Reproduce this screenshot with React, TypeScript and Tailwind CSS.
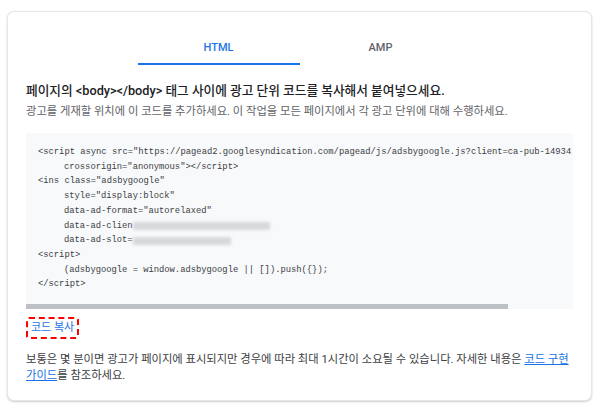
import React from "react";

const sans = { fontFamily: 'Roboto, "Noto Sans CJK KR", "Noto Sans", sans-serif' };
const mono = { fontFamily: '"Liberation Mono", "DejaVu Sans Mono", "Noto Sans CJK KR", monospace' };

function Blur({ w }: { w: number }) {
  return (
    <span
      className="inline-block align-middle h-[8px] bg-[#c9cbd0] blur-[1.5px] opacity-70"
      style={{ width: w }}
    />
  );
}

export default function App() {
  return (
    <div className="w-[600px] h-[409px] bg-white pt-[11px] pl-[7px]" style={sans}>
      <div className="w-[585px] h-[390px] rounded-[7px] border border-[#e6e6e6] shadow-[0_1px_2px_rgba(60,64,67,0.25)] bg-white px-[18px] pt-[21px]">
        <div className="flex justify-center">
          <div className="w-[162px] h-[32px] flex items-center justify-center border-b-2 border-[#1a73e8] text-[11px] font-medium text-[#1a73e8]">
            HTML
          </div>
          <div className="w-[162px] h-[32px] flex items-center justify-center border-b-2 border-transparent text-[11px] font-medium text-[#5f6368]">
            AMP
          </div>
        </div>
        <div className="mt-[18px] text-[12.7px] leading-[16px] font-medium text-[#202124] whitespace-nowrap">
          페이지의 &lt;body&gt;&lt;/body&gt; 태그 사이에 광고 단위 코드를 복사해서 붙여넣으세요.
        </div>
        <div className="mt-[5px] text-[11.3px] leading-[16px] text-[#5f6368] whitespace-nowrap">
          광고를 게재할 위치에 이 코드를 추가하세요. 이 작업을 모든 페이지에서 각 광고 단위에 대해 수행하세요.
        </div>
        <div className="mt-[13px] bg-[#f8f9fa] overflow-hidden">
          <div
            className="pt-[12px] pb-[12px] pl-[12px] text-[8.8px] leading-[14.7px] text-[#3c4043] whitespace-pre"
            style={mono}
          >
            <div>&lt;script async src="https://pagead2.googlesyndication.com/pagead/js/adsbygoogle.js?client=ca-pub-14934</div>
            <div className="pl-[26px]">crossorigin="anonymous"&gt;&lt;/script&gt;</div>
            <div>&lt;ins class="adsbygoogle"</div>
            <div className="pl-[26px]">style="display:block"</div>
            <div className="pl-[26px]">data-ad-format="autorelaxed"</div>
            <div className="pl-[26px] flex items-center">
              <span>data-ad-clien</span>
              <Blur w={137} />
            </div>
            <div className="pl-[26px] flex items-center">
              <span>data-ad-slot=</span>
              <Blur w={98} />
            </div>
            <div>&lt;script&gt;</div>
            <div className="pl-[26px]">(adsbygoogle = window.adsbygoogle || []).push({'{}'});</div>
            <div>&lt;/script&gt;</div>
          </div>
          <div className="h-[5px] w-[482px] bg-[#bdc1c6]" />
        </div>
        <div className="mt-[8px] flex">
          <span className="border-2 border-dashed border-[#ff0000] rounded-[3px] px-[3px] h-[22px] flex items-center text-[11px] text-[#1a73e8]">
            코드 복사
          </span>
        </div>
        <div className="mt-[13px] text-[11.3px] leading-[16px] text-[#3c4043] break-keep">
          보통은 몇 분이면 광고가 페이지에 표시되지만 경우에 따라 최대 1시간이 소요될 수 있습니다. 자세한 내용은{" "}
          <a className="text-[#1a73e8] underline">코드 구현 가이드</a>를 참조하세요.
        </div>
      </div>
    </div>
  );
}
